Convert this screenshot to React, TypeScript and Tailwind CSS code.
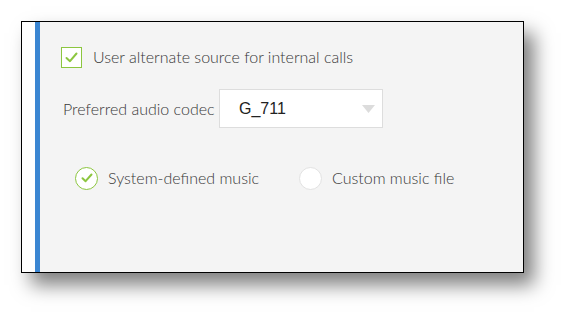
import { useState } from "react";

const lato = { fontFamily: "Lato, 'Open Sans', sans-serif" };

export default function App() {
  const [useAlt, setUseAlt] = useState(true);
  const [music, setMusic] = useState<"system" | "custom">("system");

  const radios: Array<{ id: "system" | "custom"; label: string }> = [
    { id: "system", label: "System-defined music" },
    { id: "custom", label: "Custom music file" },
  ];

  return (
    <div className="w-[565px] h-[315px] bg-white pt-[21px] pl-[21px]" style={lato}>
      <div className="flex w-[503px] h-[252px] border border-black bg-white shadow-[10px_12px_18px_rgba(0,0,0,0.5)]">
        <div className="w-[15px] bg-white" />
        <div className="w-[6px] bg-[#3b86d2]" />
        <div className="flex-1 bg-[#f4f4f4] pl-[21px] pt-[23px]">
          {/* alternate source */}
          <label className="flex items-center gap-[11px] cursor-pointer">
            <button
              type="button"
              onClick={() => setUseAlt(!useAlt)}
              className="w-[21px] h-[21px] border border-[#8cc63f] bg-white flex items-center justify-center"
            >
              {useAlt && (
                <svg width="13" height="11" viewBox="0 0 13 11">
                  <path d="M1.5 6 L5 9.2 L11.5 1.5" fill="none" stroke="#8cc63f" strokeWidth="2" strokeLinecap="round" strokeLinejoin="round" />
                </svg>
              )}
            </button>
            <span className="text-[16px] font-light text-[#383838]">User alternate source for internal calls</span>
          </label>

          {/* codec */}
          <div className="flex items-center mt-[20px]">
            <span className="text-[16px] font-light text-[#383838] pl-[2px] w-[158px]">Preferred audio codec</span>
            <div className="relative w-[164px] h-[39px] bg-white border border-[#dddddd] flex items-center pl-[19px]">
              <span className="text-[16px] text-[#222]" style={{ fontFamily: "'Liberation Sans', Arial, sans-serif" }}>
                G_711
              </span>
              <svg className="absolute right-[7px] top-[15px]" width="13" height="8" viewBox="0 0 13 8">
                <path d="M0 0 H13 L6.5 8 Z" fill="#dcdcdc" />
              </svg>
            </div>
          </div>

          {/* music */}
          <div className="flex items-center mt-[38px] pl-[14px]">
            {radios.map(({ id, label }) => (
              <label
                key={id}
                onClick={() => setMusic(id)}
                className="flex items-center gap-[10px] w-[224px] cursor-pointer"
              >
                <span
                  className={`w-[23px] h-[23px] rounded-full bg-white flex items-center justify-center border ${
                    music === id ? "border-[#8cc63f]" : "border-[#e2e2e2]"
                  }`}
                >
                  {music === id && (
                    <svg width="12" height="10" viewBox="0 0 12 10">
                      <path d="M1.5 5.2 L4.6 8.2 L10.5 1.5" fill="none" stroke="#8cc63f" strokeWidth="2" strokeLinecap="round" strokeLinejoin="round" />
                    </svg>
                  )}
                </span>
                <span className="text-[16px] font-light text-[#383838]">{label}</span>
              </label>
            ))}
          </div>
        </div>
      </div>
    </div>
  );
}
